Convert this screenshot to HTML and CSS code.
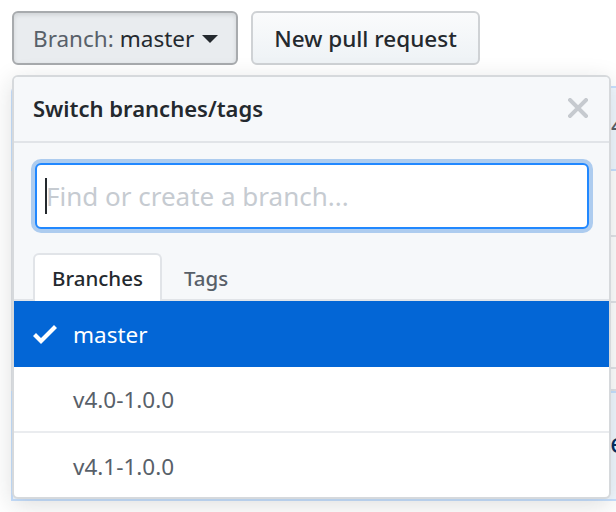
FILE: index.html
```html
<!DOCTYPE html>
<html>
<head>
<meta charset="utf-8">
<link rel="stylesheet" href="styles.css">
</head>
<body>
<div class="page">
  <div class="toolbar">
    <button class="btn btn-branch"><span class="btn-label">Branch:</span> <span class="btn-value">master</span><span class="caret"></span></button>
    <button class="btn btn-pr">New pull request</button>
  </div>

  <div class="repo">
    <div class="tease"><span class="tease-num">4</span></div>
    <div class="file-row"></div>
    <div class="file-row"></div>
    <div class="file-row"></div>
    <div class="file-row short"></div>
    <div class="readme"><span class="readme-text">e</span></div>
  </div>

  <div class="menu">
    <div class="menu-header">
      <span class="menu-title">Switch branches/tags</span>
      <svg class="menu-close" width="20" height="20" viewBox="0 0 20 20"><path d="M2 2L18 18M18 2L2 18" stroke="#c6cacf" stroke-width="4" stroke-linecap="square" fill="none"/></svg>
    </div>
    <div class="menu-filter">
      <div class="filter-input"><span class="caret-bar"></span><span class="placeholder">Find or create a branch...</span></div>
    </div>
    <div class="menu-tabs">
      <div class="tab tab-active">Branches</div>
      <div class="tab">Tags</div>
    </div>
    <div class="menu-list">
      <div class="item item-selected">
        <svg class="check" width="24" height="32" viewBox="0 0 12 16"><path d="M12 5l-8 8-4-4 1.5-1.5L4 10l6.5-6.5L12 5z" fill="#fff"/></svg>
        <span class="item-name">master</span>
      </div>
      <div class="item"><span class="item-name">v4.0-1.0.0</span></div>
      <div class="item"><span class="item-name">v4.1-1.0.0</span></div>
    </div>
  </div>
</div>
</body>
</html>
```

FILE: styles.css
```css
* { box-sizing: border-box; }
html, body {
  margin: 0;
  padding: 0;
  background: #fff;
}
body {
  width: 616px;
  height: 512px;
  overflow: hidden;
  font-family: "Noto Sans", "Open Sans", sans-serif;
  color: #24292e;
}
.page {
  position: relative;
  width: 616px;
  height: 512px;
}
.toolbar {
  display: flex;
  gap: 13px;
  padding: 11px 0 0 12px;
}
.btn {
  height: 54px;
  border-radius: 6px;
  font-family: inherit;
  font-size: 22.5px;
  line-height: 1;
  padding: 2px 19px 0;
  display: flex;
  align-items: center;
  white-space: nowrap;
  margin: 0;
}
.btn-branch {
  width: 226px;
  background: #e9ecef;
  border: 2px solid #a8abae;
  box-shadow: inset 0 2px 4px rgba(27,31,35,0.12);
  color: #24292e;
}
.btn-label { color: #586069; }
.btn-value { color: #24292e; margin-left: 6px; }
.caret {
  width: 0;
  height: 0;
  margin-left: 8px;
  border-left: 8px solid transparent;
  border-right: 8px solid transparent;
  border-top: 8px solid #24292e;
}
.btn-pr {
  width: 229px;
  justify-content: center;
  background: linear-gradient(#fafbfc, #eff3f6 90%);
  border: 2px solid #cfd2d5;
  color: #24292e;
  font-weight: 500;
}

.repo {
  margin: 21px 0 0 11px;
  width: 700px;
}
.tease {
  height: 85px;
  background: #f1f8ff;
  border: 2px solid #c8e1ff;
  border-radius: 6px 6px 0 0;
  padding: 18px 0 0 598px;
}
.tease-num {
  font-size: 26px;
  color: #586069;
}
.file-row {
  height: 66px;
  border: 2px solid #e1e4e8;
  border-top: 0;
  background: #fff;
}
.file-row.short { height: 22px; }
.readme {
  height: 110px;
  background: #f1f8ff;
  border: 2px solid #c8e1ff;
  padding: 30px 0 0 597px;
}
.readme-text {
  font-size: 28px;
  color: #032f62;
}

.menu {
  position: absolute;
  left: 12px;
  top: 75px;
  width: 599px;
  height: 424px;
  border: 2px solid #d6d9dc;
  border-radius: 6px;
  background: #fff;
  box-shadow: 0 6px 24px rgba(27,31,35,0.15);
  overflow: hidden;
  display: flex;
  flex-direction: column;
}
.menu-header {
  height: 66px;
  flex: none;
  background: #f6f8fa;
  border-bottom: 2px solid #e1e4e8;
  display: flex;
  align-items: center;
  justify-content: space-between;
  padding: 0 21px 2px 19px;
}
.menu-title {
  font-size: 22px;
  font-weight: 600;
  color: #24292e;
}
.menu-close { display: block; }
.menu-filter {
  background: #f6f8fa;
  padding: 20px 20px 0 21px;
  flex: none;
  height: 110px;
}
.filter-input {
  height: 66px;
  background: #fff;
  border: 2px solid #2188ff;
  border-radius: 6px;
  box-shadow: 0 0 0 4px rgba(3,102,214,0.3);
  display: flex;
  align-items: center;
  padding-left: 8px;
}
.caret-bar {
  width: 2px;
  height: 36px;
  background: #24292e;
  margin-right: -1px;
}
.placeholder {
  font-size: 26px;
  color: #c6cbd1;
}
.menu-tabs {
  flex: none;
  background: #f6f8fa;
  border-bottom: 2px solid #e1e4e8;
  display: flex;
  align-items: flex-end;
  padding-left: 19px;
  height: 48px;
}
.tab {
  height: 48px;
  margin-bottom: -2px;
  display: flex;
  align-items: center;
  padding: 0 17px 0 17px;
  font-size: 20.5px;
  font-weight: 500;
  color: #586069;
  border: 2px solid transparent;
  border-bottom: 0;
  border-radius: 6px 6px 0 0;
  margin-right: 3px;
}
.tab-active {
  background: #fff;
  border-color: #e1e4e8;
  color: #24292e;
}
.menu-list {
  flex: 1;
  display: flex;
  flex-direction: column;
}
.item {
  height: 66px;
  flex: none;
  display: flex;
  align-items: center;
  padding-left: 59px;
  border-bottom: 2px solid #eaecef;
  font-size: 22.5px;
  color: #586069;
}
.item:last-child { border-bottom: 0; }
.item-selected {
  background: #0366d6;
  color: #fff;
  padding-left: 19px;
  border-bottom: 0;
}
.check { display: block; margin-right: 16px; }
```
